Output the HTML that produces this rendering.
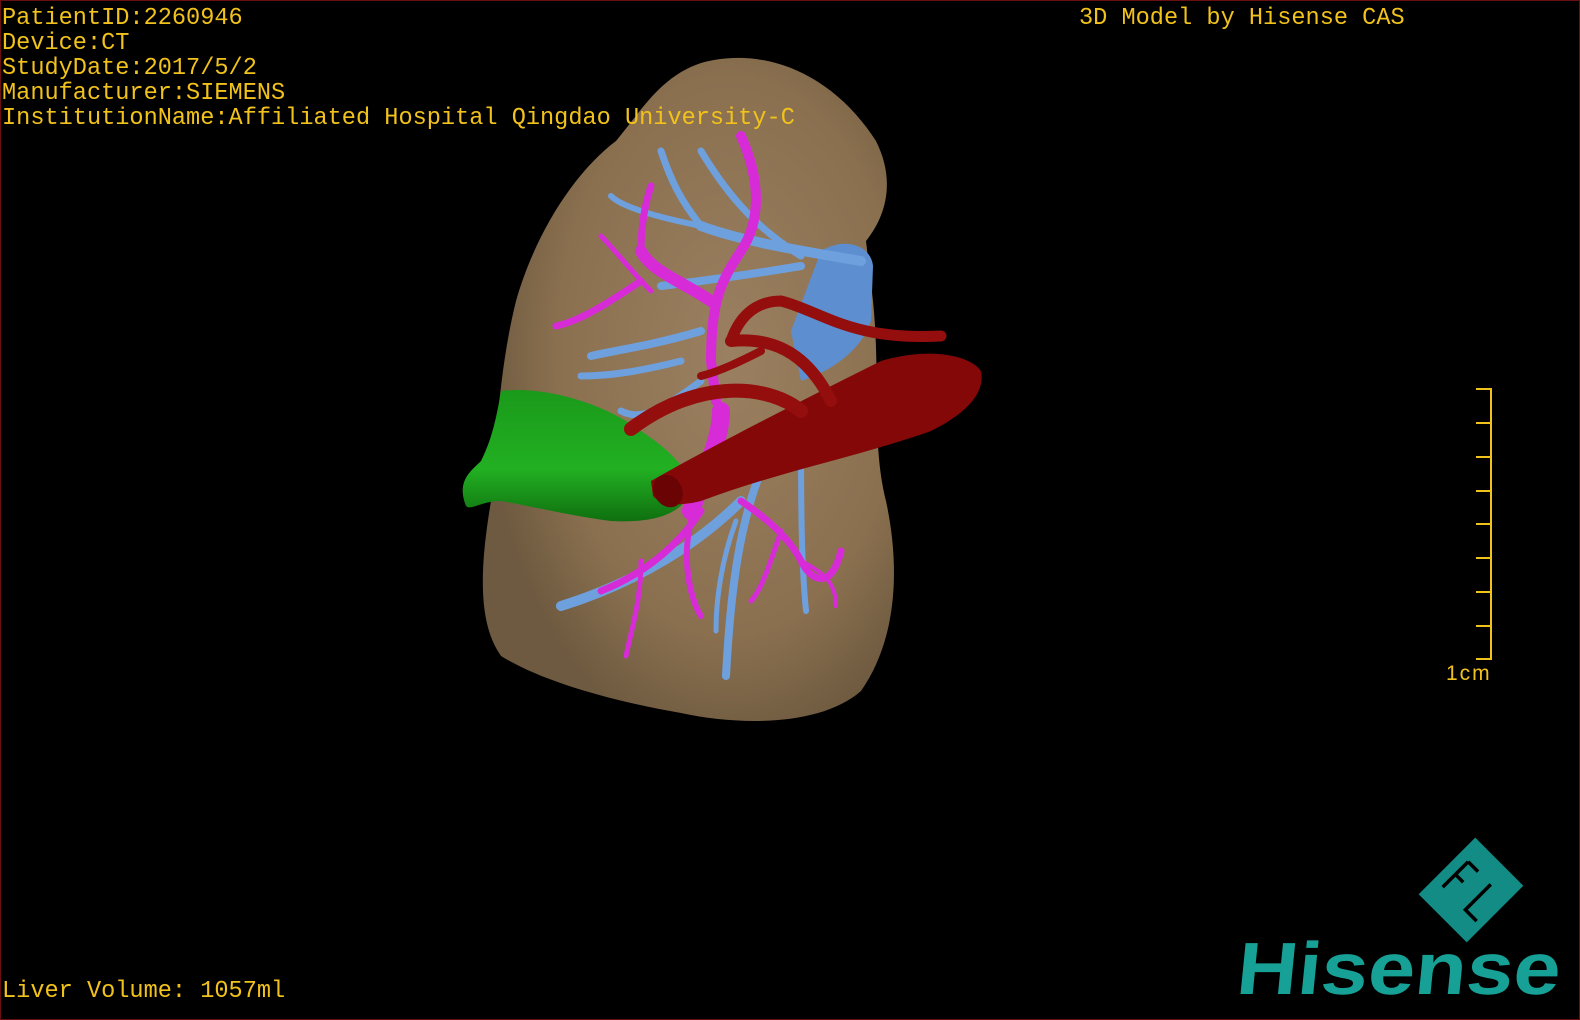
<!DOCTYPE html>
<html><head><meta charset="utf-8"><style>
html,body{margin:0;padding:0;background:#000;}
#s{position:relative;width:1578px;height:1018px;border:1px solid #6a0f10;background:#000;overflow:hidden;}
.t{position:absolute;left:1px;font-family:"Liberation Mono",monospace;font-size:23.6px;color:#f2c21c;line-height:25px;white-space:pre;}
</style></head><body><div id="s">
<svg width="1578" height="1018" style="position:absolute;left:0;top:0">
<defs>
<radialGradient id="lg" cx="0.6" cy="0.45" r="0.6"><stop offset="0" stop-color="#9a8060"/><stop offset="0.7" stop-color="#8a704f"/><stop offset="1" stop-color="#6e5a40"/></radialGradient>
<linearGradient id="gg" x1="0" y1="0" x2="0" y2="1"><stop offset="0" stop-color="#1a9a1a"/><stop offset="0.6" stop-color="#22b022"/><stop offset="1" stop-color="#0f700f"/></linearGradient>
</defs>
<path d="M700 62 C760 45 830 70 875 140 C895 180 885 215 865 240 L872 300 C880 380 870 440 885 500 C900 570 895 640 860 690 C820 725 740 725 680 712 C610 700 540 680 500 655 C475 620 480 560 490 500 C495 430 500 360 515 300 C535 230 575 170 615 140 C640 110 660 75 700 62Z" fill="url(#lg)"/>
<path d="M820 250 C845 235 870 245 872 265 L870 320 C860 350 830 370 800 380 L790 330Z" fill="#5d8fd0"/>
<g fill="none" stroke="#6fa0de" stroke-linecap="round">
<path d="M860 260 C800 250 740 240 700 225" stroke-width="10"/>
<path d="M700 225 C680 200 670 180 660 150" stroke-width="7"/>
<path d="M700 225 C650 215 620 205 610 195" stroke-width="6"/>
<path d="M800 265 C740 275 700 280 660 285" stroke-width="8"/>
<path d="M700 150 C730 200 760 230 800 255" stroke-width="7"/>
<path d="M700 330 C650 345 610 350 590 355" stroke-width="8"/>
<path d="M680 360 C640 370 610 375 580 375" stroke-width="7"/>
<path d="M700 380 C660 410 640 420 620 410" stroke-width="7"/>
<path d="M740 500 C700 540 640 580 560 605" stroke-width="10"/>
<path d="M760 470 C740 520 730 580 725 675" stroke-width="8"/>
<path d="M800 420 C800 500 800 560 805 610" stroke-width="6"/>
<path d="M735 520 C720 560 715 600 715 630" stroke-width="5"/>
</g>
<g fill="none" stroke="#d82bd8" stroke-linecap="round">
<path d="M740 135 C760 180 760 220 740 250 C720 280 710 300 710 360 L715 400" stroke-width="10"/>
<path d="M710 300 C680 280 650 270 640 250" stroke-width="12"/>
<path d="M640 250 C640 220 645 200 650 185" stroke-width="7"/>
<path d="M640 280 C610 300 580 320 555 325" stroke-width="7"/>
<path d="M650 290 C630 270 615 250 600 235" stroke-width="5"/>
<path d="M720 410 C720 440 700 480 690 510" stroke-width="18"/>
<path d="M700 510 C680 540 650 570 600 590" stroke-width="7"/>
<path d="M690 520 C680 560 690 600 700 615" stroke-width="6"/>
<path d="M640 560 C640 600 630 630 625 655" stroke-width="5"/>
<path d="M740 500 C770 520 790 540 800 560 C810 580 830 590 840 550" stroke-width="7"/>
<path d="M780 530 C770 560 760 590 750 600" stroke-width="5"/>
<path d="M800 560 C820 570 835 580 835 605" stroke-width="4"/>
</g>
<path d="M500 390 C540 385 600 400 640 430 C670 450 690 470 690 490 C680 515 650 522 610 520 C570 515 530 505 500 500 C480 500 470 510 465 505 C455 480 470 470 480 460 C490 440 495 420 500 390Z" fill="url(#gg)"/>
<path d="M650 480 C720 440 800 400 880 360 C930 345 970 355 980 370 C985 395 960 415 930 430 C860 455 780 470 700 500 C680 505 660 505 652 495Z" fill="#850808"/>
<ellipse cx="667" cy="490" rx="14" ry="17" fill="#6a0404" transform="rotate(-30 667 490)"/>
<g fill="none" stroke="#950e0e" stroke-linecap="round">
<path d="M800 410 C770 385 700 375 630 428" stroke-width="14"/>
<path d="M830 400 C810 360 780 335 730 340" stroke-width="12"/>
<path d="M730 340 C740 310 760 300 780 300 C820 310 850 340 940 335" stroke-width="11"/>
<path d="M700 375 C720 370 740 360 760 350" stroke-width="8"/>
</g>
<path d="M1475 388 H1490 V658 H1475" fill="none" stroke="#f2c21c" stroke-width="2"/>
<g stroke="#f2c21c" stroke-width="2"><path d="M1475 422H1490M1475 456H1490M1475 490H1490M1475 523H1490M1475 557H1490M1475 591H1490M1475 625H1490"/></g>
<g transform="translate(1470 889) rotate(-45)">
<rect x="-40" y="-34" width="80" height="68" fill="#138c86"/>
<path d="M-22 -18 V18 M-22 -18 H-8 M-22 0 H-11 M10 -18 V18 H26" stroke="#000" stroke-width="3.5" fill="none" transform="rotate(90)"/>
</g>
</svg>
<div class="t" style="top:5px">PatientID:2260946
Device:CT
StudyDate:2017/5/2
Manufacturer:SIEMENS
InstitutionName:Affiliated Hospital Qingdao University-C</div>
<div class="t" style="left:1078px;top:5px">3D Model by Hisense CAS</div>
<div class="t" style="top:978px">Liver Volume: 1057ml</div>
<div style="position:absolute;left:1445px;top:661px;font-family:'Liberation Sans',sans-serif;font-size:21px;letter-spacing:2px;color:#f2c21c">1cm</div>
<div style="position:absolute;left:1240px;top:931px;font-family:'Liberation Sans',sans-serif;font-weight:bold;font-size:74px;color:#17a096;line-height:74px;transform:scaleX(1.14) skewX(-5deg);transform-origin:0 0">Hisense</div>
</div></body></html>
